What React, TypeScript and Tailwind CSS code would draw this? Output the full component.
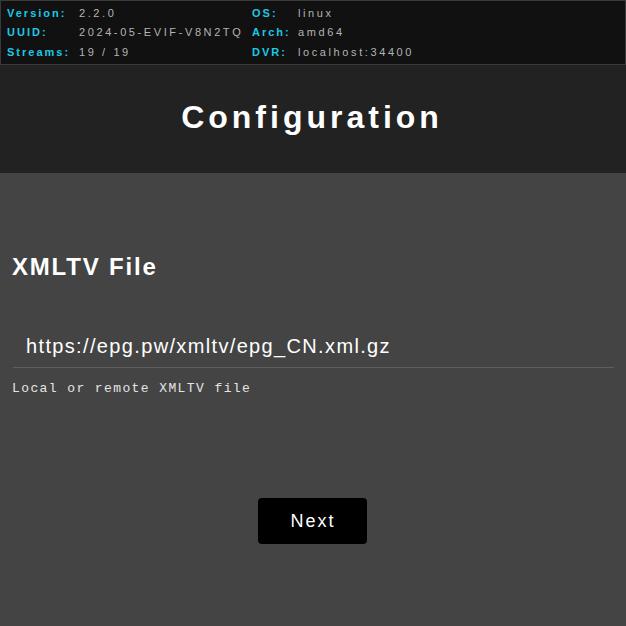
export default function App() {
    const info = [
        ["Version:", "2.2.0", "OS:", "linux"],
        ["UUID:", "2024-05-EVIF-V8N2TQ", "Arch:", "amd64"],
        ["Streams:", "19 / 19", "DVR:", "localhost:34400"],
    ];

    return (
        <main className="w-full min-h-[626px] bg-[#444444] font-['Liberation_Sans',Arial,sans-serif]">
            {/* ================= STATUS BAR ================= */}
            <section className="h-[65px] bg-[#111111] border border-[#3a3a3a] pt-[2px] pl-[6px]">
                {info.map((row, index) => (
                    <div key={index} className="flex h-[19.5px] items-center text-[11px] tracking-[2px] font-bold">
                        <span className="w-[72px] text-[#1ec8e6]">{row[0]}</span>
                        <span className="w-[173px] text-[#b4b4b4] font-normal tracking-[2.6px]">{row[1]}</span>
                        <span className="w-[46px] text-[#1ec8e6]">{row[2]}</span>
                        <span className="text-[#b4b4b4] font-normal tracking-[2.6px]">{row[3]}</span>
                    </div>
                ))}
            </section>

            {/* ================= TITLE ================= */}
            <section className="h-[108px] bg-[#222222] flex items-center justify-center">
                <h1 className="text-[32px] font-bold text-white tracking-[4px] pb-[4px] pr-[2px]">
                    Configuration
                </h1>
            </section>

            {/* ================= FORM ================= */}
            <section className="px-[12px] pt-[78px]">
                <h2 className="text-[24px] font-bold text-white leading-[32px] tracking-[1.8px]">XMLTV File</h2>

                <div className="mt-[45px] pl-[13px] pb-[4px] h-[40px] flex items-center border-b border-[#5e5e5e] ml-[1px]">
                    <span className="text-[20px] text-white tracking-[1.35px]">
                        https://epg.pw/xmltv/epg_CN.xml.gz
                    </span>
                </div>

                <p className="mt-[13px] text-[13px] leading-[16px] text-[#e4e4e4] tracking-[1.4px] font-['Liberation_Mono',monospace]">
                    Local or remote XMLTV file
                </p>

                <div className="flex justify-center mt-[101px] pr-[2px]">
                    <button className="w-[109px] h-[46px] bg-black text-white text-[18px] tracking-[2px] pl-[2px] rounded-[4px]">
                        Next
                    </button>
                </div>
            </section>
        </main>
    );
}
